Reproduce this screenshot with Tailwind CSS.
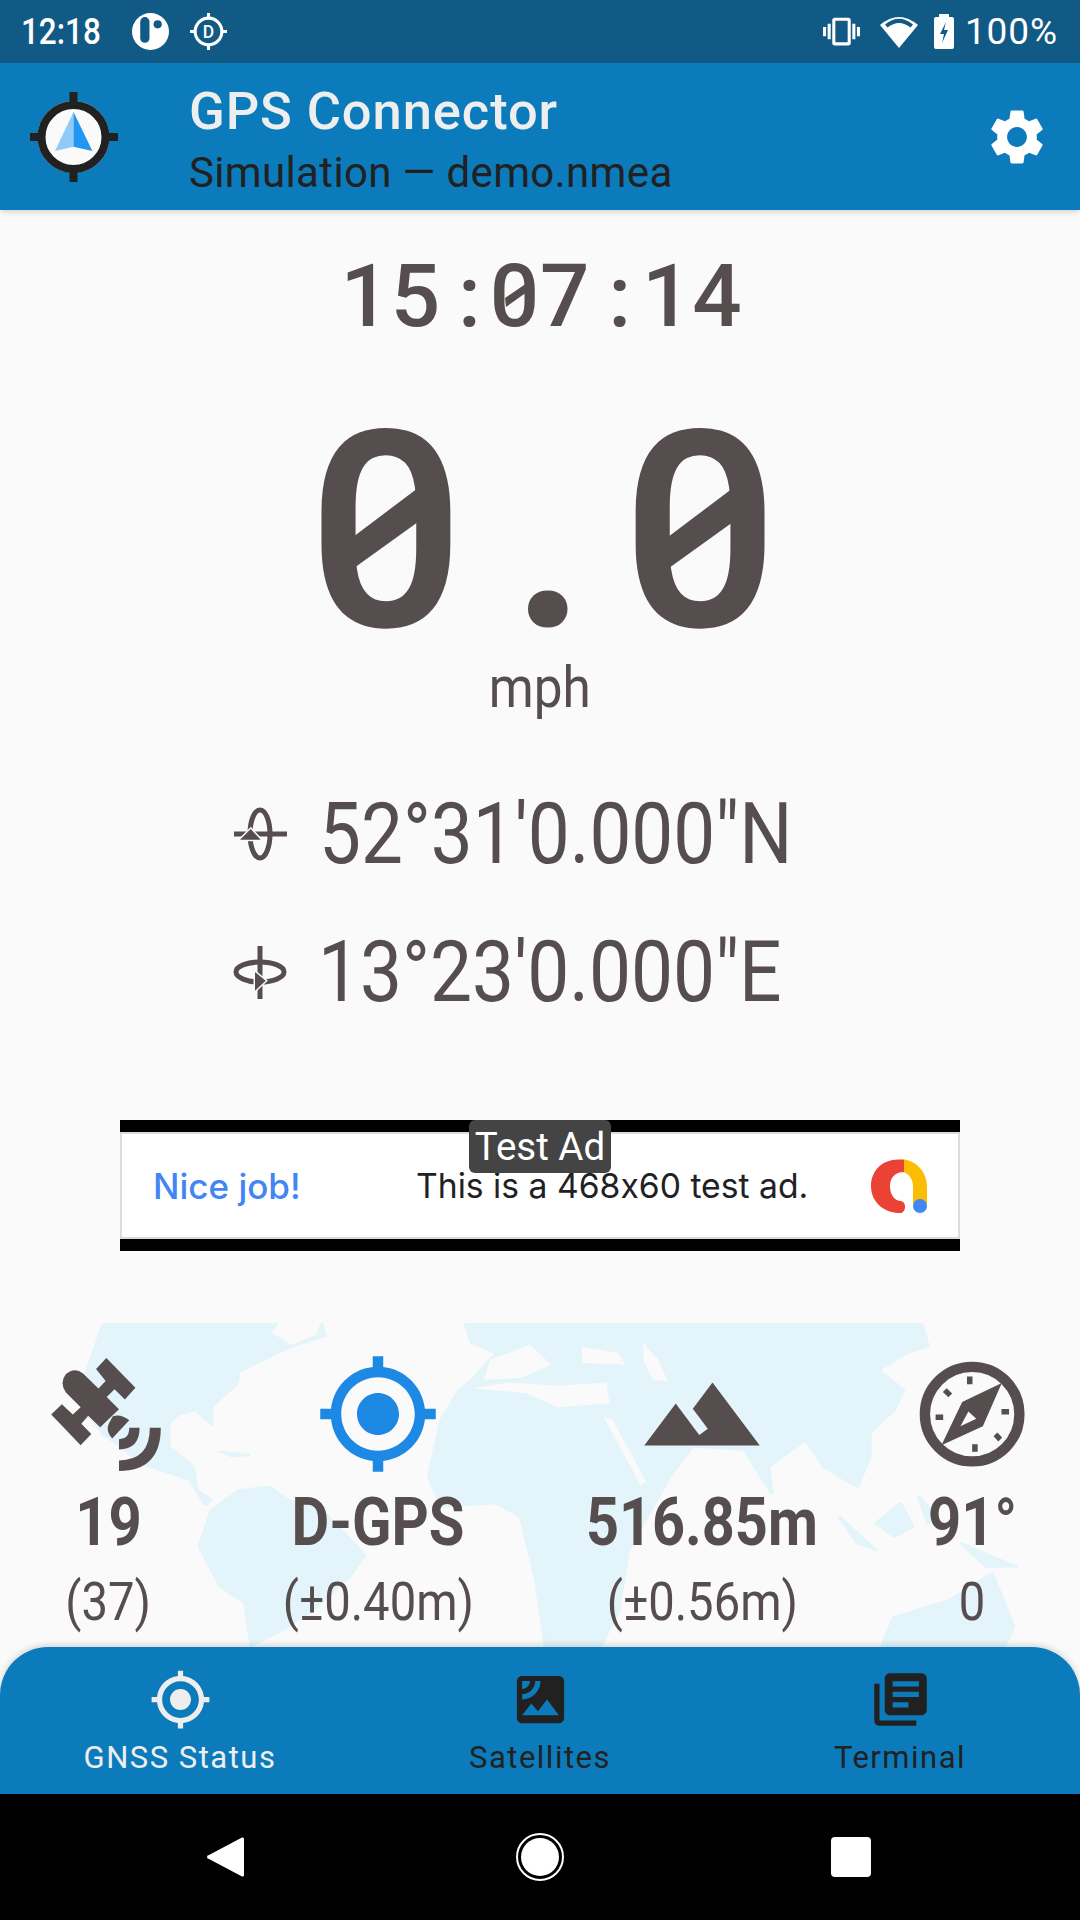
<!DOCTYPE html>
<html lang="en">

<head>
  <meta charset="UTF-8">
  <meta name="viewport" content="width=device-width, initial-scale=1.0">
  <script src="https://cdn.jsdelivr.net/npm/@tailwindcss/browser@4"></script>
  <title>GPS Connector</title>
</head>

<body class="bg-[#fafafa] font-[Roboto] text-[#564d4e]">
  <div class="relative w-[1080px] h-[1920px] overflow-hidden flex flex-col">

    <!-- status bar -->
    <div class="h-[63px] bg-[#115a85] text-white flex items-center">
      <div class="ml-[21px] w-[81px] text-[37px] font-medium leading-none origin-left scale-x-[0.85]">12:18</div>
      <svg class="ml-[30px] w-[37px] h-[37px]" viewBox="0 0 36 36">
        <circle cx="18" cy="18" r="18" fill="#fff" />
        <rect x="8" y="4" width="9" height="25" rx="4.5" fill="#115a85" />
        <circle cx="25" cy="11" r="4" fill="#115a85" />
      </svg>
      <svg class="ml-[21px] w-[37px] h-[37px]" viewBox="0 0 36 36">
        <circle cx="18" cy="18" r="13" fill="none" stroke="#fff" stroke-width="3" />
        <path d="M16.5 0h3v5h-3zM16.5 31h3v5h-3zM0 16.5h5v3H0zM31 16.5h5v3h-5z" fill="#fff" />
        <text x="18" y="24" text-anchor="middle" font-size="17" font-weight="500" fill="#fff">D</text>
      </svg>
      <svg class="ml-auto w-[37px] h-[37px]" viewBox="0 0 24 24" fill="#fff">
        <path d="M0 15h2V9H0v6zm3 2h2V7H3v10zm19-8v6h2V9h-2zm-3 8h2V7h-2v10zM16.5 3h-9C6.67 3 6 3.67 6 4.5v15c0 .83.67 1.5 1.5 1.5h9c.83 0 1.5-.67 1.5-1.5v-15c0-.83-.67-1.5-1.5-1.5zM16 19H8V5h8v14z" />
      </svg>
      <svg class="ml-[20px] w-[38px] h-[33px]" viewBox="0 0 38 33">
        <path d="M19 33L0 10Q19-6 38 10Z" fill="#fff" />
        <path d="M5 9.500Q19-2 33 9.500L30.500 12.500Q19 3.500 7.500 12.500Z" fill="#115a85" />
      </svg>
      <svg class="ml-[16px] w-[20px] h-[35px]" viewBox="0 0 20 35">
        <path d="M5 0h10v3h3a2 2 0 0 1 2 2v28a2 2 0 0 1-2 2H2a2 2 0 0 1-2-2V5a2 2 0 0 1 2-2h3z" fill="#fff" />
        <path d="M12 8L6 20h4l-2 9 6-13h-4z" fill="#115a85" />
      </svg>
      <div class="ml-[11px] mr-[22px] text-[37px] leading-none tracking-[0.9px]">100%</div>
    </div>

    <!-- app bar -->
    <div class="relative z-10 h-[147px] bg-[#0b7bbb] flex items-center shadow-md">
      <svg class="ml-[30px] w-[88px] h-[90px]" viewBox="0 0 88 90">
        <circle cx="43.500" cy="45" r="36" fill="#fafafa" />
        <circle cx="43.500" cy="45" r="32" fill="none" stroke="#212121" stroke-width="8" />
        <path d="M39.500 0h8v12h-8zM39.500 78h8v12h-8zM0 41h12v8H0zM75 41h13v8H75z" fill="#212121" />
        <path d="M43.500 20L25 59l18.500-4.300z" fill="#90caf9" />
        <path d="M43.500 20L62.400 59l-18.900-4.300z" fill="#2196f3" />
      </svg>
      <div class="ml-[71px] flex-1 pt-[6px]">
        <div class="text-[#eeeeee] text-[52.5px] font-medium leading-[60px] tracking-[0.9px]">GPS Connector</div>
        <div class="text-[#212121] text-[42px] leading-[50px] mt-[7px] tracking-[0.35px]">Simulation — demo.nmea</div>
      </div>
      <svg class="mr-[30px] w-[66px] h-[66px]" viewBox="0 0 24 24" fill="#fff">
        <path d="M19.140 12.940c.04-.3.06-.61.06-.94 0-.32-.02-.64-.07-.94l2.030-1.580c.18-.14.23-.41.12-.61l-1.920-3.320c-.12-.22-.37-.29-.59-.22l-2.390.96c-.5-.38-1.030-.7-1.620-.94l-.36-2.540c-.04-.24-.24-.41-.48-.41h-3.840c-.24 0-.43.17-.47.41l-.36 2.540c-.59.24-1.130.57-1.620.94l-2.390-.96c-.22-.08-.47 0-.59.22L2.740 8.870c-.12.21-.08.47.12.61l2.030 1.580c-.05.3-.09.63-.09.94s.02.64.07.94l-2.030 1.580c-.18.14-.23.41-.12.61l1.920 3.320c.12.22.37.29.59.22l2.390-.96c.5.38 1.030.7 1.620.94l.36 2.540c.05.24.24.41.48.41h3.840c.24 0 .44-.17.47-.41l.36-2.540c.59-.24 1.130-.56 1.620-.94l2.390.96c.22.08.47 0 .59-.22l1.920-3.320c.12-.22.07-.47-.12-.61l-2.010-1.580zM12 15.600c-1.980 0-3.600-1.620-3.600-3.600s1.620-3.600 3.600-3.600 3.600 1.620 3.600 3.600-1.620 3.600-3.600 3.600z" />
      </svg>
    </div>

    <!-- main -->
    <div class="relative flex-1 flex flex-col">
      <!-- world map -->
      <svg class="absolute left-[80px] top-[1113px] w-[960px] h-[324px]" viewBox="0 40 1568 970" preserveAspectRatio="none">
        <g fill="#e3f4fb" stroke="#e3f4fb" stroke-width="6" stroke-linejoin="round">
          <path d="M38 43L320 43 310 70 345 110 390 75 395 43 400 80 345 110 300 150 260 185 255 225 215 290 215 345 190 300 160 315 145 340 145 410 185 470 190 540 215 570 205 585 180 510 106 465 38 372 0 280 10 195z" />
          <path d="M230 425L275 435 250 440z" />
          <path d="M215 600L260 540 310 530 340 570 395 600 465 735 440 800 380 900 330 960 280 1007 270 880 230 830 195 710z" />
          <path d="M630 43L1375 43 1385 110 1350 130 1305 180 1345 240 1330 300 1290 370 1290 440 1270 530 1240 500 1215 470 1185 390 1125 470 1130 550 1085 420 1000 410 960 510 895 720 880 900 850 1007 760 1007 745 810 720 620 680 580 590 590 570 500 590 330 620 240 640 210 680 130 640 100z" />
          <path d="M1310 1007L1330 920 1420 870 1490 790 1525 950 1510 1007z" />
          <path d="M1300 640L1340 580 1360 650 1330 680zM1440 700L1530 770 1480 770zM1240 620L1300 720 1270 700zM1370 560L1400 620 1385 640z" />
        </g>
        <g fill="#fafafa">
          <path d="M640 235L700 218 780 228 860 218 865 280 780 292 730 250z" />
          <path d="M820 110L880 130 890 165 820 160z" />
          <path d="M920 100L945 150 960 215 935 210 920 150z" />
          <path d="M855 320L870 330 925 515 915 525z" />
          <path d="M670 150L735 105 770 165 720 205 660 210z" />
          <path d="M1320 170L1340 180 1365 150 1350 220 1310 190z" />
        </g>
      </svg>

      <div class="relative mt-[44px] h-[84px] pl-[3px] text-center text-[87px] leading-[84px] font-medium tracking-[0.8px]">15<span class="ml-[17px] mr-[8px]">:</span>07<span class="ml-[18px] mr-[10px]">:</span>14
        <!-- roboto has no slashed zero, so the slash goes over the digit -->
        <svg class="absolute left-0 top-0 w-[1080px] h-[84px]" viewBox="0 254 1080 84">
          <path d="M505 298L527 283V292L506 307z" fill="#564d4e" />
        </svg>
      </div>

      <div class="relative mt-[66px] h-[256px] text-center text-[272px] leading-[256px] font-medium pl-[6px] [-webkit-text-stroke:2px_#564d4e]">0<span class="ml-[48px] mr-[36px]">.</span>0
        <svg class="absolute left-0 top-0 w-[1080px] h-[256px]" viewBox="0 404 1080 256">
          <path d="M353 537L418 488V522L354 568z" fill="#564d4e" />
          <path d="M668 537L733 488V522L669 568z" fill="#564d4e" />
        </svg>
      </div>

      <div class="relative h-[60px] mt-[-2px] text-center text-[57px] leading-[60px]"><span class="inline-block scale-x-[0.9]">mph</span></div>

      <!-- lat / lon -->
      <div class="relative mt-[78px] h-[76px] flex items-center pl-[230px]">
        <svg class="w-[60px] h-[60px]" viewBox="0 0 60 60">
          <ellipse cx="30" cy="30" rx="10" ry="24" fill="none" stroke="#564d4e" stroke-width="5" />
          <path d="M4 27.500h53v5H4z" fill="#564d4e" />
          <path d="M20.700 25L10 35.700h20.700z" fill="#564d4e" stroke="#fafafa" stroke-width="3" paint-order="stroke" />
        </svg>
        <div class="ml-[29px] text-[86px] leading-[76px] origin-left scale-x-[0.868] whitespace-nowrap">52°31'0.000"N</div>
      </div>
      <div class="relative mt-[62px] h-[76px] flex items-center pl-[230px]">
        <svg class="w-[60px] h-[60px]" viewBox="0 0 60 60">
          <ellipse cx="30" cy="30" rx="24" ry="10" fill="none" stroke="#564d4e" stroke-width="5" />
          <path d="M27.500 4h5v53h-5z" fill="#564d4e" />
          <path d="M35.700 38.700L25 30v18.700z" fill="#564d4e" stroke="#fafafa" stroke-width="3" paint-order="stroke" />
        </svg>
        <div class="ml-[28px] text-[86px] leading-[76px] origin-left scale-x-[0.87] whitespace-nowrap">13°23'0.000"E</div>
      </div>

      <!-- ad -->
      <div class="relative mt-[110px] mx-[120px] h-[131px] bg-black py-[12px]">
        <div class="h-full bg-white border-2 border-[#d5dde2] flex items-center font-[Inter] text-[#202124] [font-feature-settings:'calt'_0]">
          <div class="ml-[31px] w-[263px] pt-[2px] text-[35px] font-medium text-[#4285f4]">Nice job!</div>
          <div class="pt-[2px] text-[33.7px]">This is a 468x60 test ad.</div>
          <svg class="ml-auto mr-[31px] w-[56px] h-[54px]" viewBox="0 0 56 54">
            <path d="M31 0C47 2 56 14 56 28V46H42V28C42 20 38 14 31 13z" fill="#fbbc04" />
            <path d="M33 1C14-2 0 10 0 27 0 44 14 54 29 54 35 54 36 43 30 42 24 42 19 36 19 27 19 19 24 13 33 13z" fill="#ea4335" />
            <circle cx="49" cy="47" r="7" fill="#4285f4" />
          </svg>
        </div>
        <div class="absolute top-0 left-[349px] w-[142px] h-[53px] bg-[#444444] rounded-md text-white text-[38.5px] leading-[54px] text-center">Test Ad</div>
      </div>

      <!-- stats -->
      <div class="relative mt-[100px] flex text-center">
        <div class="w-[216px]">
          <div class="h-[126px] flex items-center justify-center pr-[5px]">
            <svg class="w-[110px] h-[113px]" viewBox="147 133 320 330" fill="#564d4e">
              <path d="M308 133L393 220 362 254 332 224 309 247 345 283 290 335 255 302 235 325 264 355 233 388 147 298 178 268 210 298 233 277 190 234Q170 205 190 180 215 158 240 178L285 222 306 200 278 165z" />
              <path d="M327 303Q350 295 375 315L325 368Q305 345 315 325z" />
              <path d="M345 400Q405 400 405 337L375 337Q375 370 345 370z" />
              <path d="M345 463Q467 463 467 337L435 337Q435 432 345 432z" />
            </svg>
          </div>
          <div class="mt-[10px] h-[70px] text-[67px] leading-[70px] font-bold"><span class="inline-block scale-x-[0.865]">19</span></div>
          <div class="mt-[10px] h-[70px] text-[53px] leading-[70px]"><span class="inline-block scale-x-[0.89]">(37)</span></div>
        </div>
        <div class="w-[324px]">
          <div class="h-[126px] flex items-center justify-center">
            <svg class="w-[126px] h-[126px]" viewBox="0 0 24 24" fill="#1e88e5">
              <path d="M12 8c-2.210 0-4 1.790-4 4s1.790 4 4 4 4-1.790 4-4-1.790-4-4-4zm8.940 3c-.46-4.170-3.770-7.480-7.940-7.940V1h-2v2.060C6.830 3.520 3.520 6.830 3.060 11H1v2h2.060c.46 4.170 3.770 7.480 7.940 7.940V23h2v-2.060c4.170-.46 7.480-3.770 7.940-7.940H23v-2h-2.060zM12 19c-3.870 0-7-3.130-7-7s3.130-7 7-7 7 3.130 7 7-3.130 7-7 7z" />
            </svg>
          </div>
          <div class="mt-[10px] h-[70px] text-[67px] leading-[70px] font-bold"><span class="inline-block scale-x-[0.865]">D-GPS</span></div>
          <div class="mt-[10px] h-[70px] text-[53px] leading-[70px]"><span class="inline-block scale-x-[0.89]">(±0.40m)</span></div>
        </div>
        <div class="w-[324px]">
          <div class="h-[126px] flex items-center justify-center">
            <svg class="w-[126px] h-[126px]" viewBox="0 0 24 24" fill="#564d4e">
              <path d="M14 6l-3.750 5 2.850 3.800-1.600 1.200C9.810 13.750 7 10 7 10l-6 8h22L14 6z" />
            </svg>
          </div>
          <div class="mt-[10px] h-[70px] text-[67px] leading-[70px] font-bold"><span class="inline-block scale-x-[0.86]">516.85m</span></div>
          <div class="mt-[10px] h-[70px] text-[53px] leading-[70px]"><span class="inline-block scale-x-[0.89]">(±0.56m)</span></div>
        </div>
        <div class="w-[216px]">
          <div class="h-[126px] flex items-center justify-center">
            <svg class="w-[107px] h-[109px]" viewBox="1100 148 310 316" fill="#564d4e">
              <circle cx="1254" cy="305" r="137" fill="none" stroke="#564d4e" stroke-width="30" />
              <path fill-rule="evenodd" d="M1340 215L1285 340 1165 395 1225 270zM1243 297L1220 340 1266 318z" />
              <path d="M1239 196h16v22h-16zM1254 392h16v22h-16zM1148 306h22v16h-22zM1339 290h22v16h-22z" />
              <path d="M1180 230l16 15-11 11-16-15zM1327 358l14 15-11 11-14-15z" />
            </svg>
          </div>
          <div class="mt-[10px] h-[70px] text-[67px] leading-[70px] font-bold"><span class="inline-block scale-x-[0.865]">91°</span></div>
          <div class="mt-[10px] h-[70px] text-[53px] leading-[70px]"><span class="inline-block scale-x-[0.89]">0</span></div>
        </div>
      </div>
    </div>

    <!-- bottom nav -->
    <div class="relative z-10 h-[147px] bg-[#0b7bbb] rounded-t-[48px] flex text-[31px] leading-none tracking-[1.5px] shadow-[0_-2px_6px_rgba(0,0,0,0.15)]">
      <div class="w-[360px] flex flex-col items-center text-[#eeeeee]">
        <svg class="mt-[21px] w-[63px] h-[63px]" viewBox="0 0 24 24" fill="#eeeeee">
          <path d="M12 8c-2.210 0-4 1.790-4 4s1.790 4 4 4 4-1.790 4-4-1.790-4-4-4zm8.940 3c-.46-4.170-3.770-7.480-7.940-7.940V1h-2v2.060C6.830 3.520 3.520 6.830 3.060 11H1v2h2.060c.46 4.170 3.770 7.480 7.940 7.940V23h2v-2.060c4.170-.46 7.480-3.770 7.940-7.940H23v-2h-2.060zM12 19c-3.870 0-7-3.130-7-7s3.130-7 7-7 7 3.130 7 7-3.130 7-7 7z" />
        </svg>
        <div class="mt-[11px]">GNSS Status</div>
      </div>
      <div class="w-[360px] flex flex-col items-center text-[#212121]">
        <svg class="mt-[21px] w-[63px] h-[63px]" viewBox="0 0 24 24" fill="#212121">
          <path d="M19 3H5c-1.100 0-2 .9-2 2v14c0 1.100.9 2 2 2h14c1.100 0 2-.9 2-2V5c0-1.100-.9-2-2-2zM5 4.990h3C8 6.650 6.660 8 5 8V4.990zM5 12v-2c2.760 0 5-2.250 5-5.010h2C12 8.860 8.870 12 5 12zm0 6l3.500-4.500 2.500 3.010L14.500 12l4.500 6H5z" />
        </svg>
        <div class="mt-[11px]">Satellites</div>
      </div>
      <div class="w-[360px] flex flex-col items-center text-[#212121]">
        <svg class="mt-[21px] w-[63px] h-[63px]" viewBox="0 0 24 24" fill="#212121">
          <path d="M4 6H2v14c0 1.100.9 2 2 2h14v-2H4V6zm16-4H8c-1.100 0-2 .9-2 2v12c0 1.100.9 2 2 2h12c1.100 0 2-.9 2-2V4c0-1.100-.9-2-2-2zm-1 9H9V9h10v2zm-4 4H9v-2h6v2zm4-8H9V5h10v2z" />
        </svg>
        <div class="mt-[11px]">Terminal</div>
      </div>
    </div>

    <!-- navigation bar -->
    <div class="relative z-20 h-[126px] bg-black">
      <svg class="absolute left-[207px] top-[42px] w-[37px] h-[42px]" viewBox="0 0 37 42">
        <path d="M35 1.500L2 19a2 2 0 0 0 0 4L35 40.500a1.500 1.500 0 0 0 2-1.500V3a1.500 1.500 0 0 0-2-1.500z" fill="#fff" />
      </svg>
      <div class="absolute left-[516px] top-[39px] w-[48px] h-[48px] rounded-full border-2 border-white p-[3px]">
        <div class="w-full h-full rounded-full bg-white"></div>
      </div>
      <div class="absolute left-[831px] top-[43px] w-[40px] h-[40px] rounded-[4px] bg-white"></div>
    </div>
  </div>
</body>

</html>
